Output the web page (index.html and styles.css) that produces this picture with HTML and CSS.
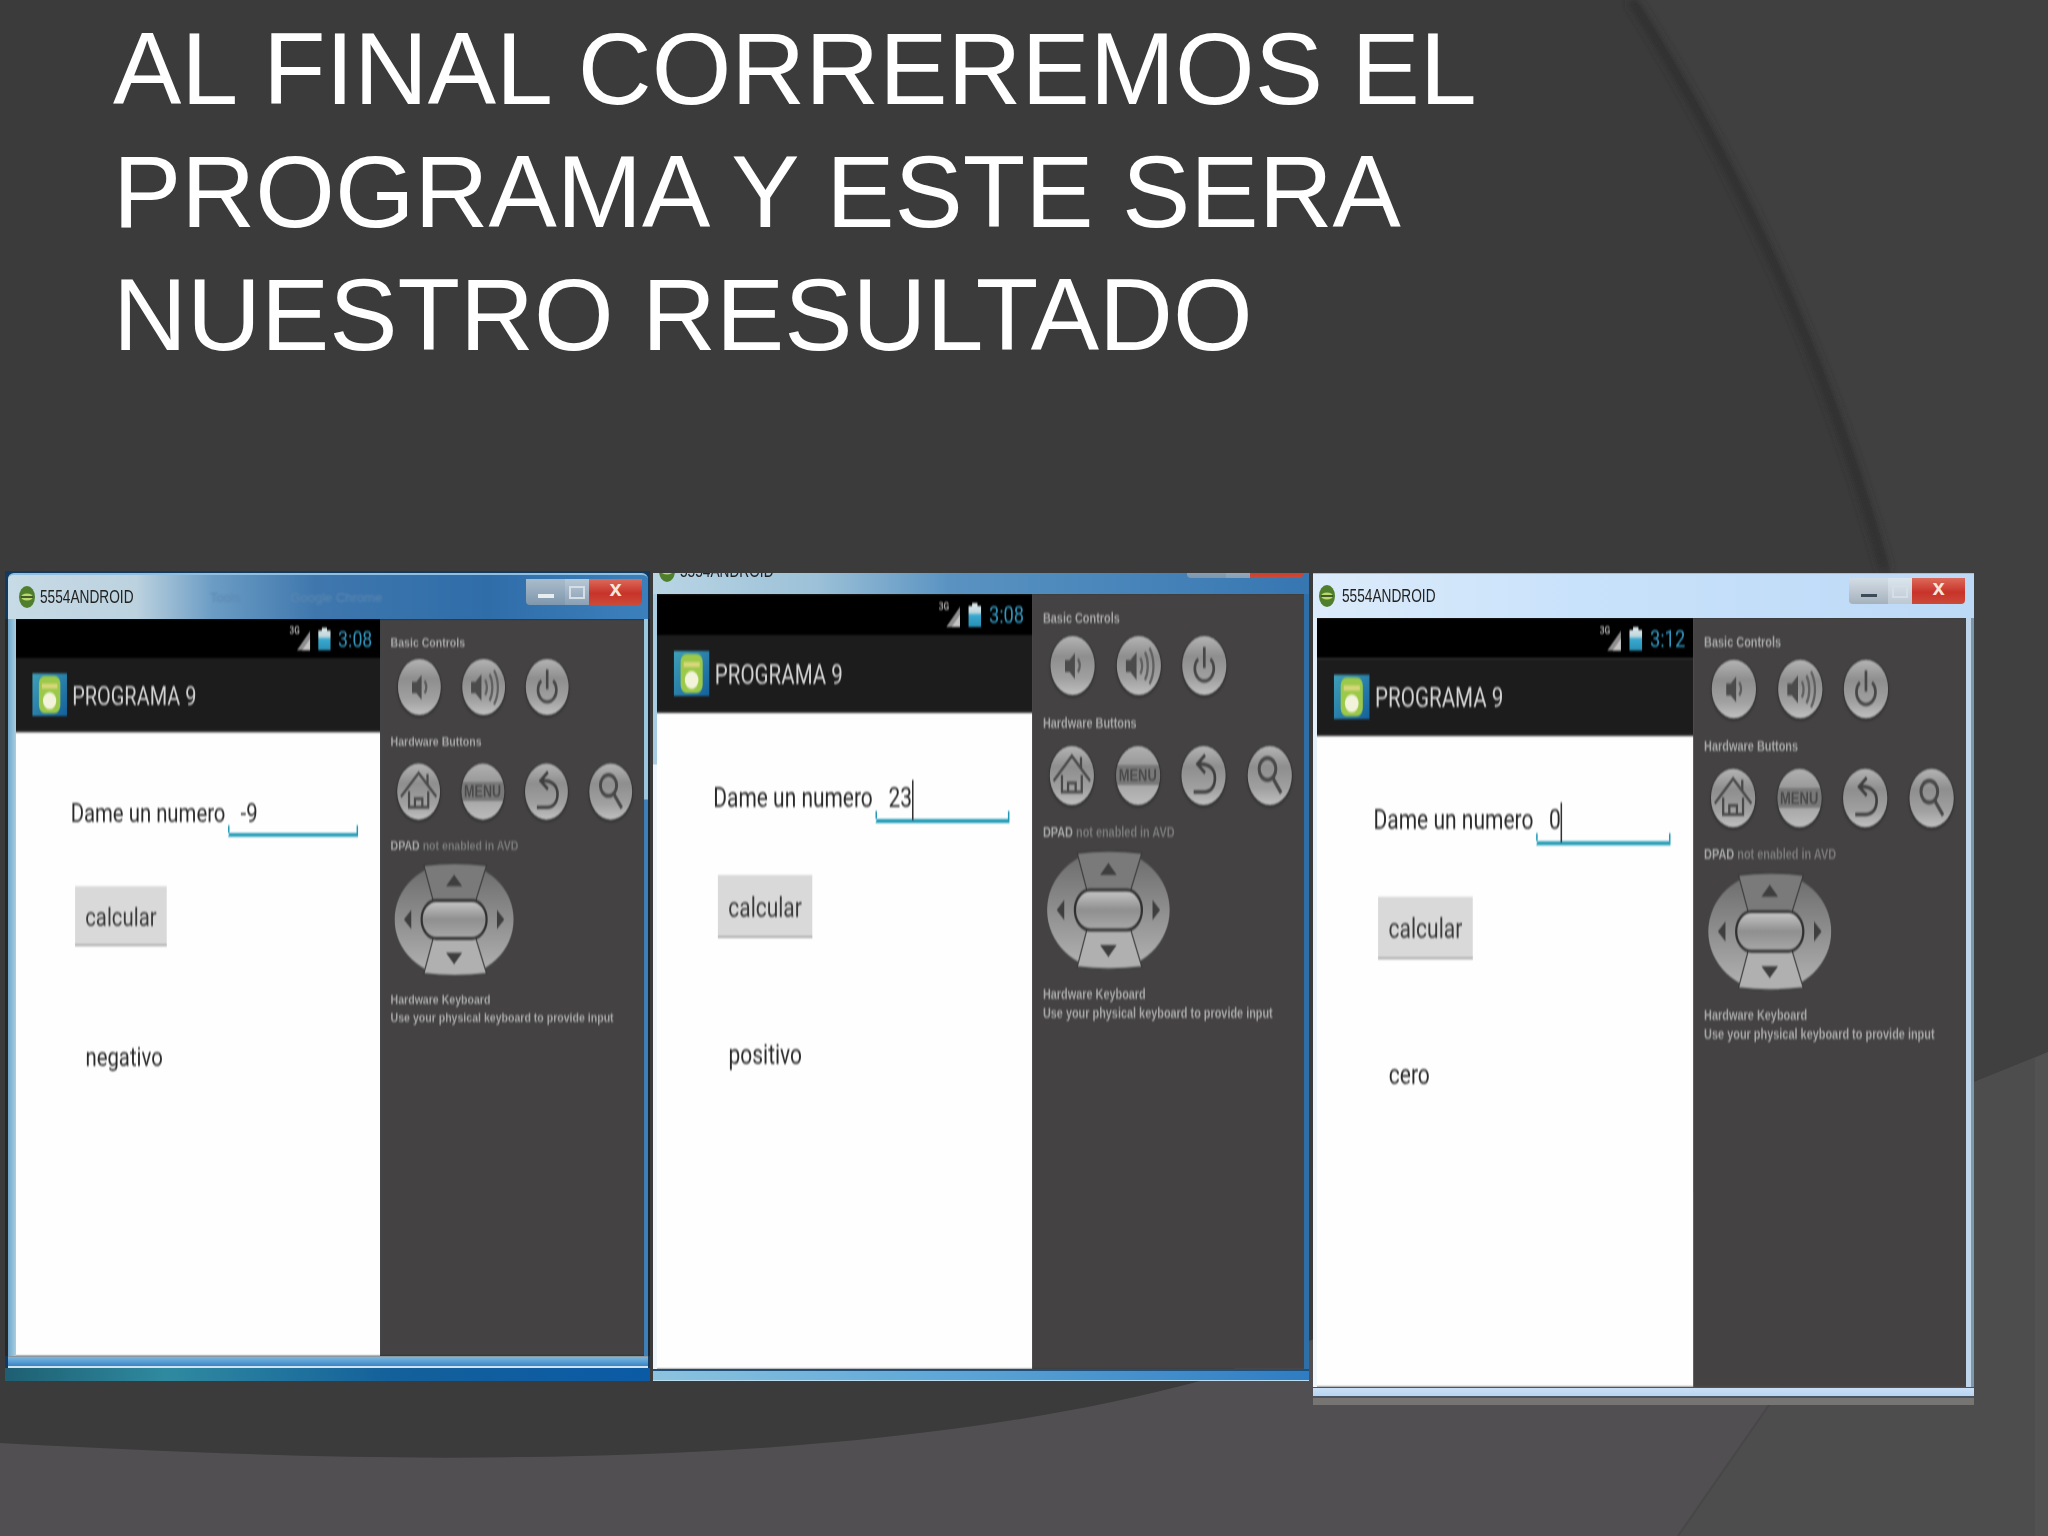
FILE: index.html
```html
<!DOCTYPE html>
<html lang="es">
<head>
<meta charset="utf-8">
<title>Programa 9</title>
<link rel="stylesheet" href="styles.css">
</head>
<body>
<svg class="defs" width="0" height="0" aria-hidden="true">
  <defs>
    <linearGradient id="padSide" x1="0" y1="0" x2="0" y2="1">
      <stop offset="0" stop-color="#6a6a6a"/><stop offset="0.5" stop-color="#8e8e8e"/><stop offset="1" stop-color="#b4b4b4"/>
    </linearGradient>
    <linearGradient id="padCentre" x1="0" y1="0" x2="0" y2="1">
      <stop offset="0" stop-color="#c8c8c8"/><stop offset="0.5" stop-color="#8f8f8f"/><stop offset="1" stop-color="#a8a8a8"/>
    </linearGradient>
    <linearGradient id="appTile" x1="0" y1="0" x2="1" y2="1">
      <stop offset="0" stop-color="#3fa0b8"/><stop offset="1" stop-color="#14609c"/>
    </linearGradient>
    <linearGradient id="bat" x1="0" y1="0" x2="0" y2="1">
      <stop offset="0" stop-color="#dfe8ea"/><stop offset="0.4" stop-color="#bfd8de"/><stop offset="0.5" stop-color="#39a9d0"/><stop offset="1" stop-color="#2a8fb5"/>
    </linearGradient>
    <symbol id="i-voldown" viewBox="0 0 58 59"><path d="M19 24h6l7-7v26l-7-7h-6z" fill="#4b4b4b"/><path d="M36 23c3 4 3 9 0 13" fill="none" stroke="#5c5c5c" stroke-width="3"/></symbol>
    <symbol id="i-volup" viewBox="0 0 58 59"><path d="M12 24h6l8-8v28l-8-8h-6z" fill="#4b4b4b"/><path d="M31 22c3 5 3 11 0 16M37 16c5 8 5 20 0 28M43 12c7 11 7 25 0 36" fill="none" stroke="#606060" stroke-width="3"/></symbol>
    <symbol id="i-power" viewBox="0 0 58 59"><path d="M21 23a12.500 12.500 0 1 0 16 0" fill="none" stroke="#474747" stroke-width="3.500"/><path d="M29 11v21" stroke="#474747" stroke-width="3.500"/></symbol>
    <symbol id="i-home" viewBox="0 0 58 59"><path d="M5 35 29 10l24 25M16 29v17h26V29M24 46v-9h10v9M41 11v12" fill="none" stroke="#4a4a4a" stroke-width="3"/></symbol>
    <symbol id="i-back" viewBox="0 0 58 59"><path d="M31 9 21 18l10 9" fill="none" stroke="#3f3f3f" stroke-width="3.500"/><path d="M22 18c14-1 22 5 22 14s-6 14-14 14H16" fill="none" stroke="#3f3f3f" stroke-width="3.500"/></symbol>
    <symbol id="i-search" viewBox="0 0 58 59"><circle cx="26" cy="23" r="11" fill="none" stroke="#484848" stroke-width="4"/><path d="M33 32l11 15" stroke="#484848" stroke-width="4"/></symbol>
    <symbol id="i-dpad" viewBox="0 0 162 120">
      <ellipse cx="81" cy="60" rx="80.500" ry="59.500" fill="url(#padSide)"/>
      <path d="M40 3q41-4 85 0l-15 38H53z" fill="#7a7a7a" stroke="#3a3a3a" stroke-width="1.500"/>
      <path d="M53 79h57l15 38q-44 4-85 0z" fill="#b0b0b0" stroke="#3a3a3a" stroke-width="1.500"/>
      <rect x="37" y="40" width="88" height="40" rx="20" fill="url(#padCentre)" stroke="#303030" stroke-width="3"/>
      <path d="M81 13l11 12H70zM81 107l-11-12h22zM13 60l10-10v20zM149 60l-10-10v20z" fill="#3e3e3e"/>
    </symbol>
    <symbol id="i-app" viewBox="0 0 47 45">
      <rect width="47" height="45" fill="url(#appTile)"/>
      <rect x="9" y="3" width="29" height="39" rx="8" fill="#9cc94a"/>
      <path d="M13 11h21v5H13z" fill="#d8d77a"/>
      <circle cx="23.500" cy="29" r="9" fill="#f3f3dc"/>
    </symbol>
    <symbol id="i-win" viewBox="0 0 16 22">
      <ellipse cx="8" cy="11" rx="8" ry="11" fill="#4f7f2c"/>
      <ellipse cx="8" cy="11" rx="6" ry="3.500" fill="#b7d86a"/>
      <path d="M2 11h12" stroke="#20301a" stroke-width="1.500"/>
    </symbol>
    <symbol id="i-signal" viewBox="0 0 27 24"><path d="M26 4v20H8z" fill="#8f8f8f"/><path d="M26 12v12H15z" fill="#c4c4c4"/></symbol>
    <symbol id="i-battery" viewBox="0 0 17 24"><path d="M5 0h7v3h5v21H0V3h5z" fill="url(#bat)"/></symbol>
  </defs>
</svg>

<main class="slide">
  <svg class="backdrop" viewBox="0 0 2048 1536" aria-hidden="true">
    <defs>
      <filter id="soft" x="-10%" y="-10%" width="120%" height="120%"><feGaussianBlur stdDeviation="4"/></filter>
    </defs>
    <path d="M1636 0C1745 172 1832 364 1890 570C1925 700 1960 880 1974 1082L2048 1052V0Z" fill="#404040"/>
    <path d="M1632 0C1741 172 1828 364 1885 570" fill="none" stroke="#2f2f2f" stroke-width="9" filter="url(#soft)"/>
    <path d="M0 1443C170 1452 350 1460 522 1457C720 1455 980 1440 1200 1381C1450 1290 1700 1190 1974 1082L2048 1052V1536H0Z" fill="#514f51"/>
    <path d="M1769 1405L1678 1536H2048V1052L1974 1082Z" fill="#4e4d4e"/>
    <path d="M1769 1405L1678 1536" fill="none" stroke="#484748" stroke-width="2"/>
    <path d="M2035 1058V1536H2048V1052Z" fill="#525252"/>
  </svg>

  <h1 class="headline">AL FINAL CORREREMOS EL<br>PROGRAMA Y ESTE SERA<br>NUESTRO RESULTADO</h1>

  <section class="shots">
    <!-- window 1 -->
    <article class="win win-a">
      <header class="titlebar">
        <svg class="win-icon"><use href="#i-win"/></svg>
        <span class="win-title">5554ANDROID</span>
        <span class="ghost ghost-a">Tools</span>
        <span class="ghost ghost-b">Google Chrome</span>
        <span class="win-btns"><i class="b-min"></i><i class="b-max"></i><i class="b-close">x</i></span>
      </header>
      <div class="mid">
        <div class="clip">
          <div class="device">
            <div class="screen">
              <div class="status"><span class="net">3G</span><svg class="s-signal"><use href="#i-signal"/></svg><svg class="s-battery"><use href="#i-battery"/></svg><span class="clock">3:08</span></div>
              <div class="actionbar"><svg class="app-icon"><use href="#i-app"/></svg><span class="app-name">PROGRAMA 9</span></div>
              <div class="content">
                <div class="form-row"><span class="label">Dame un numero</span><span class="edit">-9</span></div>
                <div class="action">calcular</div>
                <div class="result">negativo</div>
              </div>
            </div>
            <div class="panel">
              <div class="ph">Basic Controls</div>
              <div class="keys keys-a">
                <span class="key"><svg><use href="#i-voldown"/></svg></span>
                <span class="key"><svg><use href="#i-volup"/></svg></span>
                <span class="key"><svg><use href="#i-power"/></svg></span>
              </div>
              <div class="ph ph-b">Hardware Buttons</div>
              <div class="keys keys-b">
                <span class="key"><svg><use href="#i-home"/></svg></span>
                <span class="key key-menu">MENU</span>
                <span class="key"><svg><use href="#i-back"/></svg></span>
                <span class="key"><svg><use href="#i-search"/></svg></span>
              </div>
              <div class="ph ph-c">DPAD <span class="dim">not enabled in AVD</span></div>
              <svg class="dpad"><use href="#i-dpad"/></svg>
              <div class="ph ph-d">Hardware Keyboard<br>Use your physical keyboard to provide input</div>
            </div>
          </div>
        </div>
      </div>
      <footer class="bottom"></footer>
      <div class="under"></div>
    </article>

    <!-- window 2 -->
    <article class="win win-b">
      <header class="titlebar">
        <svg class="win-icon"><use href="#i-win"/></svg>
        <span class="win-title">5554ANDROID</span>
        <span class="win-btns"><i class="b-min"></i><i class="b-max"></i><i class="b-close"></i></span>
      </header>
      <div class="mid">
        <div class="clip">
          <div class="device">
            <div class="screen">
              <div class="status"><span class="net">3G</span><svg class="s-signal"><use href="#i-signal"/></svg><svg class="s-battery"><use href="#i-battery"/></svg><span class="clock">3:08</span></div>
              <div class="actionbar"><svg class="app-icon"><use href="#i-app"/></svg><span class="app-name">PROGRAMA 9</span></div>
              <div class="content">
                <div class="form-row"><span class="label">Dame un numero</span><span class="edit">23<b class="caret"></b></span></div>
                <div class="action">calcular</div>
                <div class="result">positivo</div>
              </div>
            </div>
            <div class="panel">
              <div class="ph">Basic Controls</div>
              <div class="keys keys-a">
                <span class="key"><svg><use href="#i-voldown"/></svg></span>
                <span class="key"><svg><use href="#i-volup"/></svg></span>
                <span class="key"><svg><use href="#i-power"/></svg></span>
              </div>
              <div class="ph ph-b">Hardware Buttons</div>
              <div class="keys keys-b">
                <span class="key"><svg><use href="#i-home"/></svg></span>
                <span class="key key-menu">MENU</span>
                <span class="key"><svg><use href="#i-back"/></svg></span>
                <span class="key"><svg><use href="#i-search"/></svg></span>
              </div>
              <div class="ph ph-c">DPAD <span class="dim">not enabled in AVD</span></div>
              <svg class="dpad"><use href="#i-dpad"/></svg>
              <div class="ph ph-d">Hardware Keyboard<br>Use your physical keyboard to provide input</div>
            </div>
          </div>
        </div>
      </div>
      <footer class="bottom"></footer>
    </article>

    <!-- window 3 -->
    <article class="win win-c">
      <header class="titlebar">
        <svg class="win-icon"><use href="#i-win"/></svg>
        <span class="win-title">5554ANDROID</span>
        <span class="win-btns"><i class="b-min"></i><i class="b-max"></i><i class="b-close">x</i></span>
      </header>
      <div class="mid">
        <div class="clip">
          <div class="device">
            <div class="screen">
              <div class="status"><span class="net">3G</span><svg class="s-signal"><use href="#i-signal"/></svg><svg class="s-battery"><use href="#i-battery"/></svg><span class="clock">3:12</span></div>
              <div class="actionbar"><svg class="app-icon"><use href="#i-app"/></svg><span class="app-name">PROGRAMA 9</span></div>
              <div class="content">
                <div class="form-row"><span class="label">Dame un numero</span><span class="edit">0<b class="caret"></b></span></div>
                <div class="action">calcular</div>
                <div class="result">cero</div>
              </div>
            </div>
            <div class="panel">
              <div class="ph">Basic Controls</div>
              <div class="keys keys-a">
                <span class="key"><svg><use href="#i-voldown"/></svg></span>
                <span class="key"><svg><use href="#i-volup"/></svg></span>
                <span class="key"><svg><use href="#i-power"/></svg></span>
              </div>
              <div class="ph ph-b">Hardware Buttons</div>
              <div class="keys keys-b">
                <span class="key"><svg><use href="#i-home"/></svg></span>
                <span class="key key-menu">MENU</span>
                <span class="key"><svg><use href="#i-back"/></svg></span>
                <span class="key"><svg><use href="#i-search"/></svg></span>
              </div>
              <div class="ph ph-c">DPAD <span class="dim">not enabled in AVD</span></div>
              <svg class="dpad"><use href="#i-dpad"/></svg>
              <div class="ph ph-d">Hardware Keyboard<br>Use your physical keyboard to provide input</div>
            </div>
          </div>
        </div>
      </div>
      <footer class="bottom"></footer>
      <div class="under"></div>
    </article>
  </section>
</main>
</body>
</html>
```
FILE: styles.css
```css
* { box-sizing: border-box; }
html, body { margin: 0; padding: 0; background: #3b3b3b; }
.defs { position: absolute; }

.slide {
  position: relative;
  width: 2048px;
  height: 1536px;
  overflow: hidden;
  background: #3b3b3b;
  display: flex;
  flex-direction: column;
}
.backdrop { position: absolute; inset: 0; width: 2048px; height: 1536px; }

.headline {
  position: relative;
  margin: 0;
  padding: 7px 0 0 113px;
  height: 571px;
  font: 400 102.400px/123px "Liberation Sans", Arial, sans-serif;
  color: #fff;
  filter: blur(.4px);
}

.shots {
  position: relative;
  display: flex;
  align-items: flex-start;
  padding-left: 5px;
}

/* ---- Windows chrome ---- */
.win { flex: none; overflow: hidden; display: flex; flex-direction: column; }
.win-a { width: 645px; background: #123a60; --bw: 628px; --bh: 737px; --sx: .7388; --sy: .951; }
.win-b { width: 656px; margin: 2px 0 0 3px; --bw: 647px; --bh: 775px; --sx: .7612; --sy: 1; }
.win-c { width: 661px; margin: 2px 0 0 4px; --bw: 649px; --bh: 769px; --sx: .7635; --sy: .992; }

.titlebar {
  flex: none;
  display: flex;
  align-items: center;
  height: 46px;
  font-family: "Liberation Sans", Arial, sans-serif;
  color: #222;
}
.win-a .titlebar {
  height: 46px;
  margin: 2px 2px 0 3px;
  padding: 0 6px 0 9px;
  border-top: 2px solid #8fc0e0;
  border-radius: 6px 6px 0 0;
  background: linear-gradient(90deg, #c7dbe6 0, #bcd2df 20%, #6b9cc4 32%, #3f77ad 48%, #2f6da9 75%, #3c80bb 100%);
}
.win-b .titlebar {
  margin-top: -25px;
  height: 46px;
  padding: 0 6px 0 4px;
  background: linear-gradient(90deg, #b9d5e4 0, #9cc1d8 25%, #5a93c2 45%, #3676b1 100%);
}
.win-c .titlebar {
  height: 45px;
  padding: 0 9px 0 4px;
  background: linear-gradient(90deg, #dcebfa 0, #c9e2fb 40%, #bcd9f6 100%);
  border-top: 1px solid #a8bdd0;
}
.win-icon { width: 16px; height: 22px; margin-left: 2px; margin-right: 5px; flex: none; }
.win-c .win-icon { margin-right: 7px; }
.win-title {
  display: inline-block;
  width: 96px;
  font-size: 19px;
  transform: scaleX(.72);
  transform-origin: left center;
  white-space: nowrap;
  filter: blur(.6px);
}
.ghost {
  font-size: 13px;
  color: #5b88b1;
  white-space: nowrap;
  filter: blur(1px);
}
.ghost-a { margin-left: 74px; }
.ghost-b { margin-left: 50px; }
.win-btns { display: flex; margin-left: auto; height: 26px; align-self: flex-start; margin-top: 4px; }
.win-btns i { display: flex; align-items: center; justify-content: center; font-style: normal; height: 100%; }
.b-min { width: 39px; background: linear-gradient(#a9bccb, #7f97ad); border-radius: 0 0 0 4px; }
.b-min::after { content: ""; width: 16px; height: 4px; background: #e8edf0; margin-top: 8px; }
.b-max { width: 24px; background: linear-gradient(#b8c8d6, #8aa0b4); }
.b-max::after { content: ""; width: 12px; height: 9px; border: 2px solid #d5dee5; }
.b-close {
  width: 53px;
  background: linear-gradient(#dc6a5a, #c8332a 55%, #cc4a38);
  border-radius: 0 0 4px 0;
  color: #f7e6d8;
  font-weight: 700;
  font-size: 22px;
  line-height: 1;
  padding-bottom: 6px;
}
.win-c .b-min { background: linear-gradient(#d3dde6, #a5b1bc); }
.win-c .b-min::after { background: #3d4a57; height: 3px; }
.win-c .b-max { background: linear-gradient(#dbe5ee, #bcc8d2); }

.mid { flex: none; display: flex; height: var(--bh); }
.win-a .mid { padding-left: 11px; background:
  linear-gradient(180deg, #9cc6de 0, #9cc6de 180px, #3f7fb8 181px) right 2px top / 4px 100% no-repeat,
  linear-gradient(90deg, #26282a 0 3px, #6fa8cc 3px, #a9cfe0 100%) left top / 11px 100% no-repeat,
  #1a2733;
}
.win-b .mid { padding-left: 4px; background:
  linear-gradient(180deg, #2e6fa8 0, #2e6fa8 100%) right / 5px 100% no-repeat,
  linear-gradient(180deg, #a8cde2 0, #a8cde2 170px, #eef6fb 171px) left / 4px 100% no-repeat;
}
.win-c .mid { padding-left: 4px; background:
  linear-gradient(90deg, #bfd6ea 0 5px, #7d97ad 5px 8px) right / 8px 100% no-repeat,
  linear-gradient(#e2eefa, #f2f7fc) left / 4px 100% no-repeat;
}
.clip { flex: none; width: var(--bw); height: var(--bh); overflow: hidden; }

.bottom { flex: none; }
.win-a .bottom { height: 12px; background: linear-gradient(#7bb6dd, #5aa0d6 50%, #3a82c4); margin: 0 2px 0 3px; border-top: 1px solid #8a97a0; border-bottom: 2px solid #d0e2ee; }
.win-a .under { height: 13px; background: linear-gradient(90deg, #1e5f72 0, #2f8aa0 25%, #14609b 60%, #0b5aa5 100%); }
.win-b .bottom { height: 12px; background: linear-gradient(90deg, #8cc3df, #62aad8 40%, #2f7cc2 100%); border-top: 2px solid #1f4f78; border-bottom: 1px solid #bcdcef; }
.win-c .bottom { height: 11px; background: linear-gradient(#c9dff5, #b8d5f3); border-top: 1px solid #4a5560; border-bottom: 2px solid #4a5560; }
.win-c .under { height: 7px; background: #777574; }

/* ---- Emulator: native layout, squeezed to the pasted picture's size ---- */
.device {
  display: flex;
  width: 850px;
  height: 775px;
  transform: scale(var(--sx), var(--sy));
  transform-origin: 0 0;
  filter: blur(1px);
  font-family: Roboto, "Liberation Sans", Arial, sans-serif;
}
.screen { flex: none; width: 493px; display: flex; flex-direction: column; background: #fefefe; }
.status {
  flex: none;
  height: 41px;
  background: #000;
  display: flex;
  align-items: center;
  justify-content: flex-end;
  padding-right: 11px;
}
.net { margin-right: -12px; align-self: flex-start; margin-top: 7px; font-size: 11px; line-height: 1; font-weight: 700; color: #a8a8a8; }
.s-signal { width: 27px; height: 24px; margin-right: 10px; }
.s-battery { width: 17px; height: 24px; margin-right: 10px; }
.clock { width: 46px; font-size: 24px; line-height: 1; color: #3398c0; white-space: nowrap; }
.actionbar {
  flex: none;
  height: 78px;
  background: #1d1c1d;
  border-bottom: 2px solid #2b2b2b;
  display: flex;
  align-items: center;
  padding-left: 22px;
  color: #d4d4d4;
}
.app-icon { width: 47px; height: 45px; margin-right: 7px; flex: none; }
.app-name { font-size: 27px; white-space: nowrap; padding-top: 3px; }

.content { flex: 1; padding: 64px 0 0 74px; color: #2a2a2a; font-size: 27.500px; }
.form-row { display: flex; height: 45px; }
.label { width: 213px; line-height: 42px; white-space: nowrap; }
.edit {
  position: relative;
  width: 176px;
  height: 46px;
  padding-left: 15px;
  line-height: 42px;
  border-bottom: 4px solid #1f9ab6;
  border-left: 2px solid transparent;
  white-space: nowrap;
}
.edit::before, .edit::after {
  content: "";
  position: absolute;
  bottom: 0;
  width: 2px;
  height: 8px;
  background: #1f9ab6;
}
.edit::before { left: -2px; }
.edit::after { right: 0; }
.caret {
  display: inline-block;
  width: 2px;
  height: 40px;
  background: #333;
  vertical-align: middle;
}
.action {
  width: 124px;
  height: 63px;
  margin: 53px 0 0 6px;
  padding-top: 3px;
  background: #d9d9d9;
  border-bottom: 2px solid #a9a9a9;
  color: #3a3a3a;
  display: flex;
  align-items: center;
  justify-content: center;
}
.result { margin: 97px 0 0 20px; line-height: 40px; }

.panel {
  flex: none;
  width: 357px;
  padding: 14px 0 0 14px;
  background: #444243;
  color: #a8a8a8;
  font: 700 14.300px/20px "Liberation Sans", Arial, sans-serif;
  white-space: nowrap;
}
.ph-b { margin-top: 18px; }
.ph-c { margin-top: 17px; }
.ph-d { margin-top: 15px; line-height: 18.500px; }
.dim { color: #7b7b7b; }
.keys { display: flex; gap: 28.500px; }
.keys-a { margin: 8px 0 0 10px; }
.keys-b { margin: 13px 0 0 9px; }
.key {
  flex: none;
  width: 58px;
  height: 59px;
  border-radius: 50%;
  background: linear-gradient(180deg, #b4b4b4 0, #8e8e8e 35%, #a0a0a0 72%, #c0c0c0 100%);
  box-shadow: 0 0 0 1px #333, 0 2px 3px #2a2a2a;
  display: flex;
  align-items: center;
  justify-content: center;
}
.key svg { width: 58px; height: 59px; }
.key-menu {
  font-size: 17px;
  color: #4a4a4a;
  background: linear-gradient(180deg, #b0b0b0 0, #9a9a9a 32%, #787878 33%, #787878 66%, #a8a8a8 67%, #bcbcbc 100%);
}
.dpad { display: block; width: 162px; height: 120px; margin: 8px 0 0 5px; }
```
